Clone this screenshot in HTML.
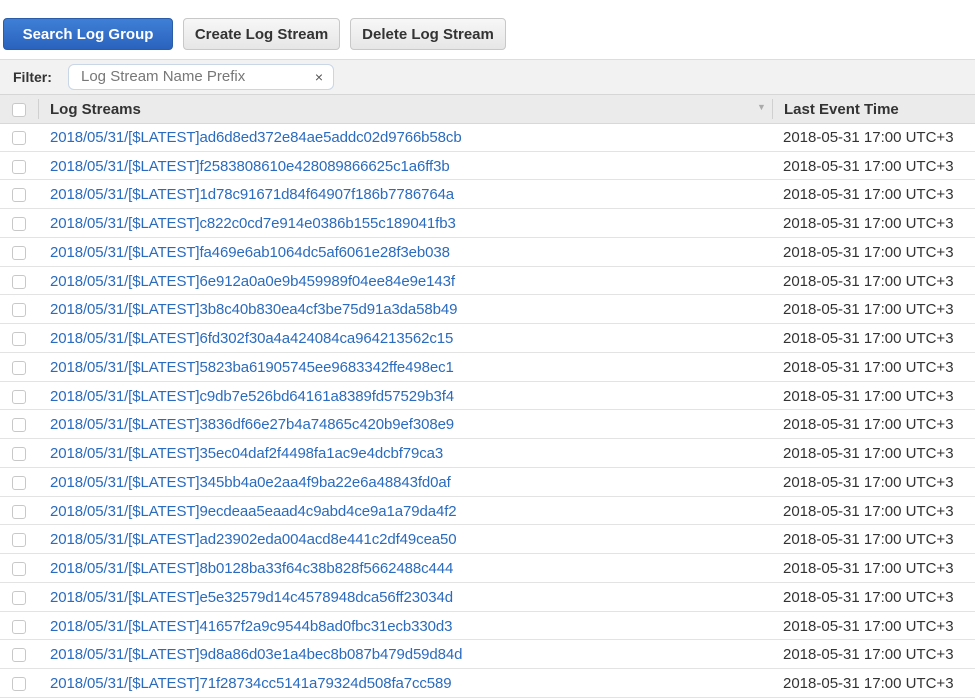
<!DOCTYPE html>
<html><head><meta charset="utf-8"><style>
body{margin:0;width:975px;height:700px;overflow:hidden;background:#fff;font-family:"Liberation Sans",Arial,sans-serif;position:relative}
.btn{position:absolute;top:18px;height:32px;border-radius:4px;font-weight:bold;font-size:15px;line-height:32px;text-align:center;box-sizing:border-box}
.b1{left:3px;width:170px;background:linear-gradient(#3f7fd6,#2a63be);color:#fff;border:1px solid #2a5ca8}
.b2{left:183px;width:157px;background:linear-gradient(#f7f7f7,#e6e6e6);color:#333;border:1px solid #c8c8c8}
.b3{left:350px;width:156px;background:linear-gradient(#f7f7f7,#e6e6e6);color:#333;border:1px solid #c8c8c8}
.filter{position:absolute;left:0;top:59px;width:975px;height:36px;background:#f2f2f2;border-top:1px solid #ddd;border-bottom:1px solid #d6d6d6;box-sizing:border-box}
.flab{position:absolute;left:13px;top:9px;font-weight:bold;font-size:14px;color:#333}
.inp{position:absolute;left:68px;top:4px;width:266px;height:26px;background:#fff;border:1px solid #c9d6e6;border-radius:6px;box-sizing:border-box;font-size:15px;color:#777;line-height:24px;padding-left:12px}
.inp span{position:absolute;right:10px;top:0;color:#555;font-size:14px}
.head{position:absolute;left:0;top:95px;width:975px;height:29px;background:#ebebeb;border-bottom:1px solid #d8d8d8;box-sizing:border-box}
.head b{position:absolute;top:6px;font-size:15px;color:#333}
.cb{position:absolute;left:12px;width:12px;height:12px;border:1px solid #c8c8c8;border-radius:3px;background:#fff}
.row{position:absolute;left:0;width:975px;height:28.74px;border-bottom:1px solid #e3e3e3;box-sizing:border-box}
.row a{position:absolute;left:50px;top:6px;font-size:15px;color:#2a6bbf;text-decoration:none;letter-spacing:-0.1px}
.row i{position:absolute;left:783px;top:6px;font-size:15px;color:#333;font-style:normal}
</style></head><body>
<div class="btn b1">Search Log Group</div>
<div class="btn b2">Create Log Stream</div>
<div class="btn b3">Delete Log Stream</div>
<div class="filter"><div class="flab">Filter:</div><div class="inp">Log Stream Name Prefix<span>×</span></div></div>
<div class="head"><div class="cb" style="top:8px"></div>
<div style="position:absolute;left:38px;top:4px;width:1px;height:20px;background:#d0d0d0"></div>
<b style="left:50px">Log Streams</b>
<span style="position:absolute;left:757px;top:7px;font-size:9px;color:#aaa">▼</span>
<div style="position:absolute;left:772px;top:4px;width:1px;height:20px;background:#d0d0d0"></div>
<b style="left:784px">Last Event Time</b></div>
<div id="rows"></div>
<script>
var ids=["ad6d8ed372e84ae5addc02d9766b58cb","f2583808610e428089866625c1a6ff3b","1d78c91671d84f64907f186b7786764a","c822c0cd7e914e0386b155c189041fb3","fa469e6ab1064dc5af6061e28f3eb038","6e912a0a0e9b459989f04ee84e9e143f","3b8c40b830ea4cf3be75d91a3da58b49","6fd302f30a4a424084ca964213562c15","5823ba61905745ee9683342ffe498ec1","c9db7e526bd64161a8389fd57529b3f4","3836df66e27b4a74865c420b9ef308e9","35ec04daf2f4498fa1ac9e4dcbf79ca3","345bb4a0e2aa4f9ba22e6a48843fd0af","9ecdeaa5eaad4c9abd4ce9a1a79da4f2","ad23902eda004acd8e441c2df49cea50","8b0128ba33f64c38b828f5662488c444","e5e32579d14c4578948dca56ff23034d","41657f2a9c9544b8ad0fbc31ecb330d3","9d8a86d03e1a4bec8b087b479d59d84d","71f28734cc5141a79324d508fa7cc589"];
var h="";ids.forEach(function(s,i){h+='<div class="row" style="top:'+(123+28.74*i)+'px"><div class="cb" style="top:8px"></div><a>2018/05/31/[$LATEST]'+s+'</a><i>2018-05-31 17:00 UTC+3</i></div>';});
document.getElementById("rows").innerHTML=h;
</script>
</body></html>
